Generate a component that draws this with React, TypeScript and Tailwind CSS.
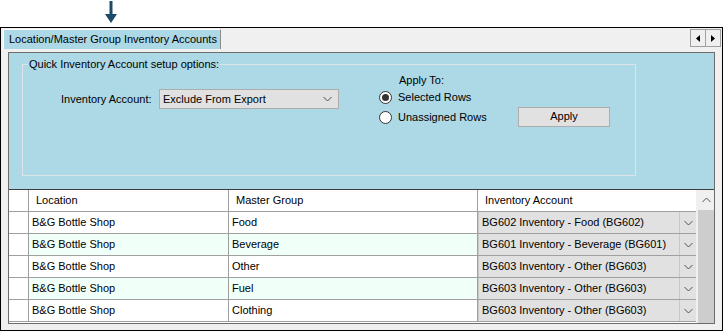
import React from "react";

const rows = [
  { loc: "B&G Bottle Shop", group: "Food", acct: "BG602 Inventory - Food (BG602)" },
  { loc: "B&G Bottle Shop", group: "Beverage", acct: "BG601 Inventory - Beverage (BG601)" },
  { loc: "B&G Bottle Shop", group: "Other", acct: "BG603 Inventory - Other (BG603)" },
  { loc: "B&G Bottle Shop", group: "Fuel", acct: "BG603 Inventory - Other (BG603)" },
  { loc: "B&G Bottle Shop", group: "Clothing", acct: "BG603 Inventory - Other (BG603)" },
];

function Chevron({ up = false }: { up?: boolean }) {
  return (
    <svg width="9" height="6" viewBox="0 0 9 6" className={up ? "rotate-180" : ""}>
      <path d="M0.5 1 L4.5 5 L8.5 1" fill="none" stroke="#505050" strokeWidth="1" />
    </svg>
  );
}

function Radio({ checked }: { checked: boolean }) {
  return (
    <div className="w-[13px] h-[13px] rounded-full border border-[#333] bg-white flex items-center justify-center">
      {checked && <div className="w-[7px] h-[7px] rounded-full bg-[#333]" />}
    </div>
  );
}

export default function App() {
  return (
    <div className="w-[723px] h-[331px] bg-white text-[11px] text-black" style={{ fontFamily: '"Liberation Sans", Arial, sans-serif' }}>
      {/* pointer arrow */}
      <div className="h-[27px] pl-[104px]">
        <svg width="14" height="24" viewBox="0 0 14 24">
          <rect x="5.5" y="1" width="3" height="15" fill="#1d4a66" />
          <path d="M1 14 L13 14 L7 23 Z" fill="#1d4a66" />
        </svg>
      </div>

      {/* window */}
      <div className="h-[304px] border border-black bg-[#f0f0f0] flex flex-col">
        {/* tab strip */}
        <div className="h-[24px] flex items-start pt-[1px]">
          <div className="ml-[2px] h-[20px] w-[218px] bg-[#add8e6] border-t border-l border-white border-r border-r-[#8c8c8c] flex items-center pl-[5px] whitespace-nowrap">
            Location/Master Group Inventory Accounts
          </div>
          <div className="ml-auto mr-[1px] flex h-[18px]">
            <div className="w-[16px] h-[18px] border border-[#a0a0a0] flex items-center justify-center">
              <svg width="4" height="7" viewBox="0 0 4 7"><path d="M4 0 L0 3.5 L4 7 Z" fill="#000" /></svg>
            </div>
            <div className="w-[15px] h-[18px] border border-[#a0a0a0] border-l-0 flex items-center justify-center">
              <svg width="4" height="7" viewBox="0 0 4 7"><path d="M0 0 L4 3.5 L0 7 Z" fill="#000" /></svg>
            </div>
          </div>
        </div>

        {/* tab page */}
        <div className="ml-[7px] w-[707px] h-[272px] border border-[#6d6d6d] bg-[#add8e6] flex flex-col">
          {/* group box */}
          <div className="relative mt-[11px] ml-[13px] w-[614px] h-[112px] border border-[#dde4e6]">
            <span className="absolute -top-[8px] left-[5px] px-[1px] bg-[#add8e6] leading-[14px]">
              Quick Inventory Account setup options:
            </span>
            <div className="flex pt-[9px]">
              <div className="ml-[38px] mt-[15px] flex items-center h-[20px]">
                <div className="w-[98px]">Inventory Account:</div>
                <div className="w-[180px] h-[20px] bg-[#e1e1e1] border border-[#adadad] flex items-center pl-[3px] pr-[6px]">
                  <span className="flex-1">Exclude From Export</span>
                  <Chevron />
                </div>
              </div>
              <div className="ml-[40px] flex flex-col">
                <div className="h-[13px] leading-[13px] pl-[20px]">Apply To:</div>
                <div className="h-[20px] flex items-center gap-[6px]">
                  <Radio checked />
                  <span>Selected Rows</span>
                </div>
                <div className="h-[20px] flex items-center">
                  <div className="w-[139px] flex items-center gap-[6px]">
                    <Radio checked={false} />
                    <span>Unassigned Rows</span>
                  </div>
                  <div className="w-[92px] h-[20px] mt-[-1px] bg-[#e1e1e1] border border-[#adadad] flex items-center justify-center">
                    Apply
                  </div>
                </div>
              </div>
            </div>
          </div>

          {/* grid */}
          <div className="mt-[13px] border-t border-[#3c3c3c] bg-white flex flex-1">
            <div className="w-[687px] flex flex-col">
              <div className="h-[22px] flex border-b border-[#a0a0a0]">
                <div className="w-[20px] border-r border-[#a0a0a0]" />
                <div className="w-[200px] border-r border-[#a0a0a0] pl-[7px] flex items-center">Location</div>
                <div className="w-[249px] border-r border-[#a0a0a0] pl-[7px] flex items-center">Master Group</div>
                <div className="w-[218px] pl-[7px] flex items-center">Inventory Account</div>
              </div>
              {rows.map((r, i) => (
                <div key={i} className={`h-[22px] flex border-b border-[#a0a0a0] ${i % 2 === 1 ? "bg-[#f0fff8]" : "bg-white"}`}>
                  <div className="w-[20px] border-r border-[#a0a0a0] bg-white" />
                  <div className="w-[200px] border-r border-[#a0a0a0] pl-[3px] flex items-center">{r.loc}</div>
                  <div className="w-[249px] border-r border-[#a0a0a0] pl-[3px] flex items-center">{r.group}</div>
                  <div className="w-[218px] flex bg-[#e1e1e1] border-l border-[#c8c8c8]">
                    <div className="flex-1 pl-[3px] flex items-center">{r.acct}</div>
                    <div className="w-[17px] border-l border-[#c8c8c8] flex items-center justify-center">
                      <Chevron />
                    </div>
                  </div>
                </div>
              ))}
            </div>
            {/* scrollbar */}
            <div className="w-[18px] bg-[#f0f0f0] flex flex-col">
              <div className="h-[20px] flex items-center justify-center pl-[2px]">
                <Chevron up />
              </div>
              <div className="flex-1 ml-[2px] bg-[#cdcdcd]" />
            </div>
          </div>
        </div>
      </div>
    </div>
  );
}
